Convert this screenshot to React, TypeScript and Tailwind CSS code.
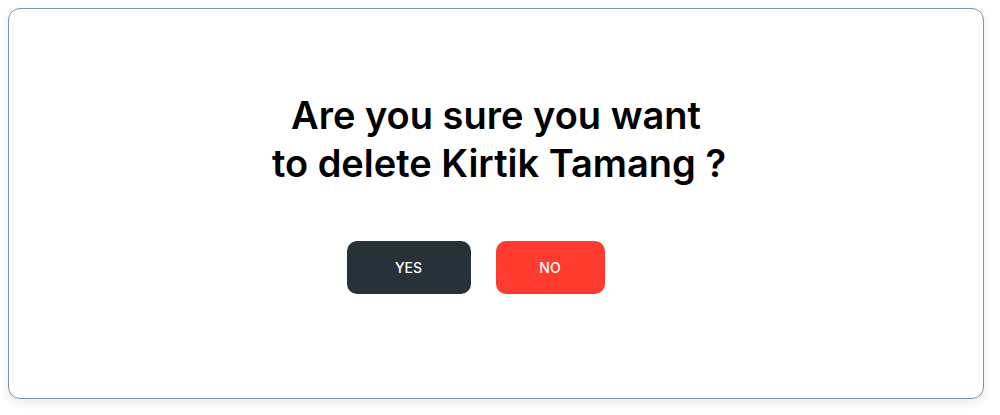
export default function App() {
  return (
    <div className="w-[1000px] h-[415px] bg-white pt-[8px] pl-[8px]" style={{ fontFamily: "Inter, 'Noto Sans', sans-serif" }}>
      <div className="w-[976px] h-[391px] rounded-[12px] border border-[#7b93a6] bg-white shadow-[0_4px_10px_rgba(0,0,0,0.08)] flex flex-col items-center">
        <h1 className="mt-[82px] text-center text-[38px] leading-[48px] font-semibold text-black">
          <span className="block">Are you sure you want</span>
          <span className="block pl-[6px]">to delete Kirtik Tamang ?</span>
        </h1>
        <div className="mt-[54px] flex gap-[25px] pr-[41px]">
          <button className="w-[124px] h-[53px] rounded-[10px] bg-[#263238] text-white text-[14px] font-medium">YES</button>
          <button className="w-[109px] h-[53px] rounded-[10px] bg-[#ff3b30] text-white text-[14px] font-medium">NO</button>
        </div>
      </div>
    </div>
  );
}
